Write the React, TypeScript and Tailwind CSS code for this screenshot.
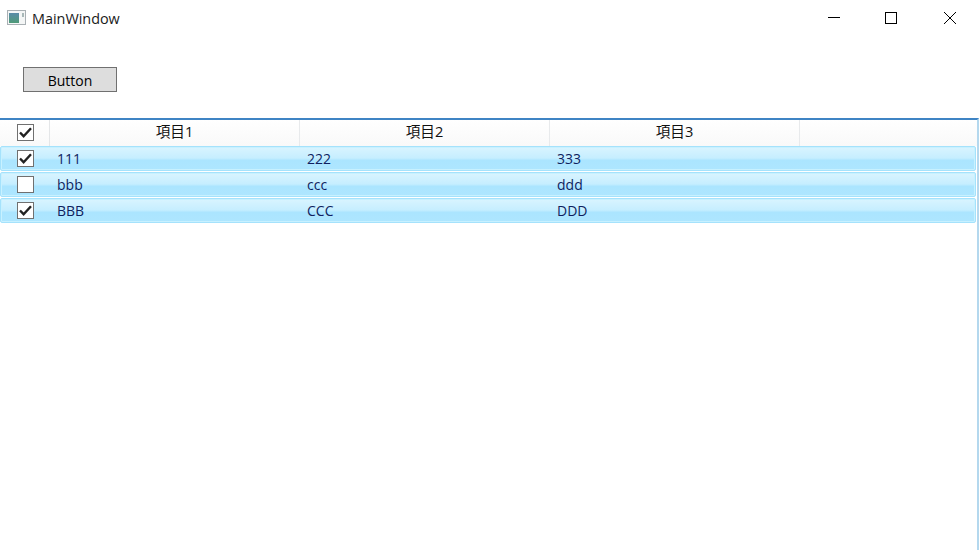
const rows = [
  { checked: true, a: "111", b: "222", c: "333", cls: "h-[25px]" },
  { checked: false, a: "bbb", b: "ccc", c: "ddd", cls: "h-[25px] mt-[1px]" },
  { checked: true, a: "BBB", b: "CCC", c: "DDD", cls: "h-[25px] mt-[1px]" },
];

function CheckBox({ checked }: { checked: boolean }) {
  return (
    <div className="w-[17px] h-[17px] bg-white border border-[#707070] flex items-center justify-center">
      {checked && (
        <svg width="15" height="15" viewBox="0 0 15 15">
          <path d="M2 7.5 L5.6 11.2 L13 3.2" fill="none" stroke="#222222" strokeWidth="2.4" />
        </svg>
      )}
    </div>
  );
}

function WindowIcon() {
  return (
    <svg width="19" height="15" viewBox="0 0 19 15">
      <defs>
        <linearGradient id="pane" x1="0" y1="0" x2="0" y2="1">
          <stop offset="0" stopColor="#5a8ba8" />
          <stop offset="1" stopColor="#4f9a78" />
        </linearGradient>
      </defs>
      <rect x="0.5" y="0.5" width="18" height="14" fill="#f4f6f6" stroke="#a9b0b4" />
      <rect x="2" y="3" width="10" height="10" fill="url(#pane)" />
      <rect x="15" y="3" width="2" height="4" fill="#a8b8b8" />
    </svg>
  );
}

function WindowButtons() {
  return (
    <div className="flex items-center pr-[1px]">
      <div className="w-[58px] flex justify-center">
        <svg width="12" height="12" viewBox="0 0 12 12" shapeRendering="crispEdges">
          <path d="M0 5.5 H12" stroke="#000000" strokeWidth="1" />
        </svg>
      </div>
      <div className="w-[58px] pr-[2px] flex justify-center">
        <svg width="12" height="12" viewBox="0 0 12 12" shapeRendering="crispEdges">
          <rect x="0.5" y="0.5" width="11" height="11" fill="none" stroke="#000000" strokeWidth="1" />
        </svg>
      </div>
      <div className="w-[58px] flex justify-center">
        <svg width="12" height="12" viewBox="0 0 12 12">
          <path d="M0 0 L12 12 M12 0 L0 12" stroke="#000000" strokeWidth="1" />
        </svg>
      </div>
    </div>
  );
}

export default function App() {
  return (
    <div className="w-[980px] h-[550px] bg-white flex flex-col overflow-hidden font-['Open_Sans','Noto_Sans_CJK_JP',sans-serif] text-[14px] text-[#111111]">
      <div className="h-[36px] flex items-center justify-between shrink-0">
        <div className="flex items-center pl-[7px] gap-[6px]">
          <WindowIcon />
          <span className="text-[14.4px] pt-[1px] text-[#1a1a1a]">MainWindow</span>
        </div>
        <WindowButtons />
      </div>
      <div className="h-[82px] pl-[23px] pt-[31px] shrink-0">
        <button className="w-[94px] h-[25px] pt-[1px] bg-[#dddddd] border border-[#707070] flex items-center justify-center text-[14px] text-black">
          Button
        </button>
      </div>
      <div className="flex-1 w-[979px] border-t-2 border-t-[#3f84c4] border-r-2 border-r-[#b4d8ee]">
        <div className="h-[26px] flex bg-gradient-to-b from-[#ffffff] to-[#f9f9f9]">
          <div className="w-[50px] pb-[1px] flex items-center justify-center border-r border-r-[#e4e6e8] pl-[1px]">
            <CheckBox checked={true} />
          </div>
          {["項目1", "項目2", "項目3"].map((h) => (
            <div key={h} className="w-[250px] pb-[2px] flex items-center justify-center border-r border-r-[#e8eaec] text-[14.6px]">
              {h}
            </div>
          ))}
        </div>
        {rows.map((r) => (
          <div
            key={r.a}
            className={`${r.cls} mr-[1px] flex items-center rounded-[2px] border border-[#a5e2fc] shadow-[inset_0_0_0_1px_#c8f1ff] bg-[linear-gradient(to_bottom,#d9f4ff_0%,#c6eeff_48%,#abe5ff_58%,#aee6ff_100%)] text-[#0f1f5f]`}
          >
            <div className="w-[49px] flex justify-center">
              <CheckBox checked={r.checked} />
            </div>
            <div className="w-[250px] pl-[7px] pb-[1px]">{r.a}</div>
            <div className="w-[250px] pl-[7px] pb-[1px]">{r.b}</div>
            <div className="w-[250px] pl-[7px] pb-[1px]">{r.c}</div>
          </div>
        ))}
      </div>
    </div>
  );
}
